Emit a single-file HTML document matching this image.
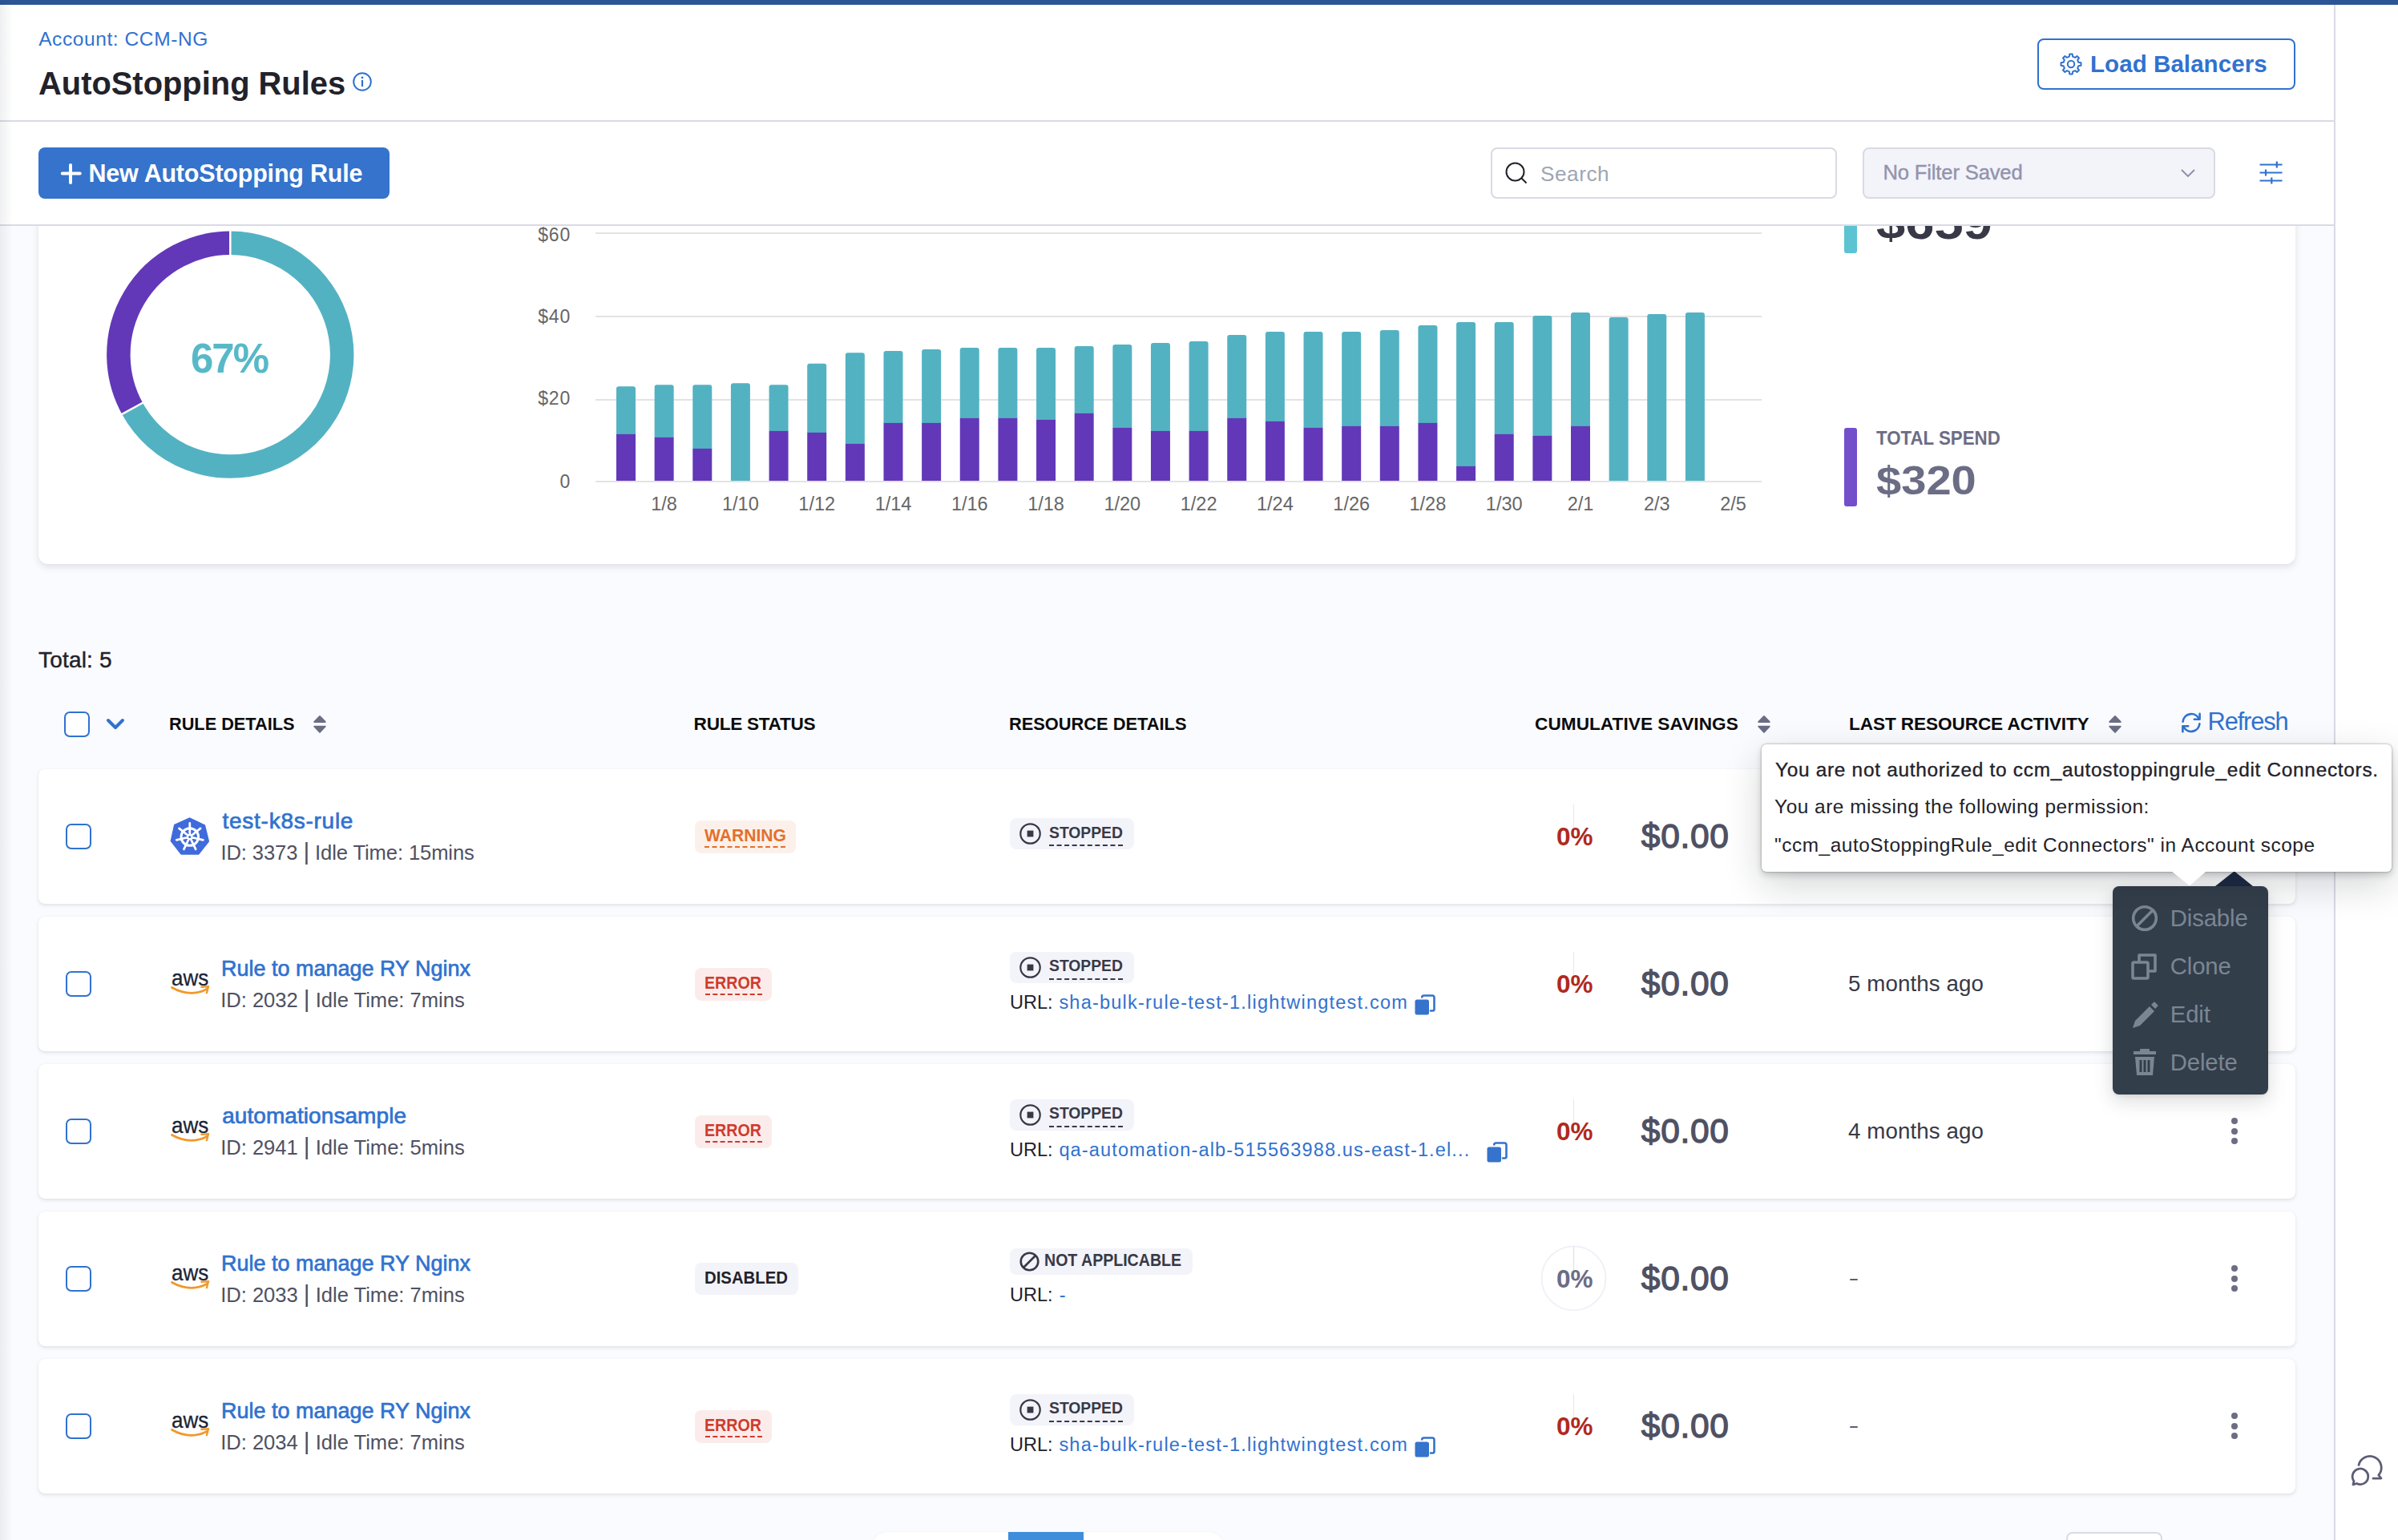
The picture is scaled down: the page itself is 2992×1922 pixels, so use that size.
<!DOCTYPE html><html><head><meta charset="utf-8"><style>
html,body{margin:0;padding:0;}
body{width:2992px;height:1922px;overflow:hidden;position:relative;background:#fafbfe;font-family:"Liberation Sans", sans-serif;}
.t{position:absolute;white-space:nowrap;}
.b{position:absolute;box-sizing:border-box;}
svg{position:absolute;overflow:visible;}
</style></head><body>
<div class="b" style="left:2912px;top:0px;width:80px;height:1922px;background:#ffffff;border-left:2px solid #d9dae5;"></div>
<div class="b" style="left:48px;top:180px;width:2816px;height:524px;background:#fff;border-radius:12px;box-shadow:0 0 2px rgba(40,41,61,0.04),0 4px 8px rgba(96,97,112,0.16);"></div>
<svg style="left:0;top:0" width="2992" height="1922" viewBox="0 0 2992 1922"><path d="M287.30,303.30 A139.4,139.4 0 1 1 165.14,509.86" fill="none" stroke="#53b2c2" stroke-width="29.5"/><path d="M165.14,509.86 A139.4,139.4 0 0 1 287.30,303.30" fill="none" stroke="#6238b9" stroke-width="29.5"/><line x1="287.3" y1="287.54999999999995" x2="287.3" y2="319.04999999999995" stroke="#fff" stroke-width="2.5"/><line x1="178.94" y1="502.27" x2="151.34" y2="517.44" stroke="#fff" stroke-width="2.5"/></svg>
<div class="t" id="pct67" style="left:-14.0px;width:600px;text-align:center;top:422.4px;font-size:51px;line-height:51px;color:#57b9c8;font-weight:700;letter-spacing:-2.1px;">67%</div>
<div class="b" style="left:743px;top:290px;width:1455px;height:2px;background:#e3e3e5;"></div>
<div class="b" style="left:743px;top:394px;width:1455px;height:2px;background:#e3e3e5;"></div>
<div class="b" style="left:743px;top:498px;width:1455px;height:2px;background:#e3e3e5;"></div>
<div class="b" style="left:743px;top:600px;width:1455px;height:2px;background:#e3e3e5;"></div>
<div class="t" id="yd60" style="right:2280.0px;top:281.9px;font-size:23px;line-height:23px;color:#666666;font-weight:400;letter-spacing:0.8px;">$60</div>
<div class="t" id="yd40" style="right:2280.0px;top:384.0px;font-size:23px;line-height:23px;color:#666666;font-weight:400;letter-spacing:0.8px;">$40</div>
<div class="t" id="yd20" style="right:2280.0px;top:485.9px;font-size:23px;line-height:23px;color:#666666;font-weight:400;letter-spacing:0.8px;">$20</div>
<div class="t" id="y0" style="right:2280.0px;top:590.1px;font-size:23px;line-height:23px;color:#666666;font-weight:400;letter-spacing:0.8px;">0</div>
<svg style="left:0;top:0" width="2992" height="1922" viewBox="0 0 2992 1922"><path d="M769.00,541.9 V485.2 Q769.00,482.2 772.00,482.2 H790.00 Q793.00,482.2 793.00,485.2 V541.9 Z" fill="#53b2c2"/><rect x="769.00" y="541.9" width="24" height="58.1" fill="#6238b9"/><path d="M816.64,545.9 V483.2 Q816.64,480.2 819.64,480.2 H837.64 Q840.64,480.2 840.64,483.2 V545.9 Z" fill="#53b2c2"/><rect x="816.64" y="545.9" width="24" height="54.1" fill="#6238b9"/><path d="M864.28,559.9 V483.2 Q864.28,480.2 867.28,480.2 H885.28 Q888.28,480.2 888.28,483.2 V559.9 Z" fill="#53b2c2"/><rect x="864.28" y="559.9" width="24" height="40.1" fill="#6238b9"/><path d="M911.92,600.0 V481.2 Q911.92,478.2 914.92,478.2 H932.92 Q935.92,478.2 935.92,481.2 V600.0 Z" fill="#53b2c2"/><path d="M959.56,537.9 V483.2 Q959.56,480.2 962.56,480.2 H980.56 Q983.56,480.2 983.56,483.2 V537.9 Z" fill="#53b2c2"/><rect x="959.56" y="537.9" width="24" height="62.1" fill="#6238b9"/><path d="M1007.20,539.9 V456.8 Q1007.20,453.8 1010.20,453.8 H1028.20 Q1031.20,453.8 1031.20,456.8 V539.9 Z" fill="#53b2c2"/><rect x="1007.20" y="539.9" width="24" height="60.1" fill="#6238b9"/><path d="M1054.84,553.9 V443.2 Q1054.84,440.2 1057.84,440.2 H1075.84 Q1078.84,440.2 1078.84,443.2 V553.9 Z" fill="#53b2c2"/><rect x="1054.84" y="553.9" width="24" height="46.1" fill="#6238b9"/><path d="M1102.48,527.9 V441.1 Q1102.48,438.1 1105.48,438.1 H1123.48 Q1126.48,438.1 1126.48,441.1 V527.9 Z" fill="#53b2c2"/><rect x="1102.48" y="527.9" width="24" height="72.1" fill="#6238b9"/><path d="M1150.12,527.9 V439.1 Q1150.12,436.1 1153.12,436.1 H1171.12 Q1174.12,436.1 1174.12,439.1 V527.9 Z" fill="#53b2c2"/><rect x="1150.12" y="527.9" width="24" height="72.1" fill="#6238b9"/><path d="M1197.76,521.9 V437.1 Q1197.76,434.1 1200.76,434.1 H1218.76 Q1221.76,434.1 1221.76,437.1 V521.9 Z" fill="#53b2c2"/><rect x="1197.76" y="521.9" width="24" height="78.1" fill="#6238b9"/><path d="M1245.40,521.9 V437.1 Q1245.40,434.1 1248.40,434.1 H1266.40 Q1269.40,434.1 1269.40,437.1 V521.9 Z" fill="#53b2c2"/><rect x="1245.40" y="521.9" width="24" height="78.1" fill="#6238b9"/><path d="M1293.04,523.9 V437.1 Q1293.04,434.1 1296.04,434.1 H1314.04 Q1317.04,434.1 1317.04,437.1 V523.9 Z" fill="#53b2c2"/><rect x="1293.04" y="523.9" width="24" height="76.1" fill="#6238b9"/><path d="M1340.68,515.9 V435.1 Q1340.68,432.1 1343.68,432.1 H1361.68 Q1364.68,432.1 1364.68,435.1 V515.9 Z" fill="#53b2c2"/><rect x="1340.68" y="515.9" width="24" height="84.1" fill="#6238b9"/><path d="M1388.32,533.9 V433.1 Q1388.32,430.1 1391.32,430.1 H1409.32 Q1412.32,430.1 1412.32,433.1 V533.9 Z" fill="#53b2c2"/><rect x="1388.32" y="533.9" width="24" height="66.1" fill="#6238b9"/><path d="M1435.96,537.9 V431.1 Q1435.96,428.1 1438.96,428.1 H1456.96 Q1459.96,428.1 1459.96,431.1 V537.9 Z" fill="#53b2c2"/><rect x="1435.96" y="537.9" width="24" height="62.1" fill="#6238b9"/><path d="M1483.60,537.9 V429.1 Q1483.60,426.1 1486.60,426.1 H1504.60 Q1507.60,426.1 1507.60,429.1 V537.9 Z" fill="#53b2c2"/><rect x="1483.60" y="537.9" width="24" height="62.1" fill="#6238b9"/><path d="M1531.24,521.9 V421.1 Q1531.24,418.1 1534.24,418.1 H1552.24 Q1555.24,418.1 1555.24,421.1 V521.9 Z" fill="#53b2c2"/><rect x="1531.24" y="521.9" width="24" height="78.1" fill="#6238b9"/><path d="M1578.88,525.9 V417.1 Q1578.88,414.1 1581.88,414.1 H1599.88 Q1602.88,414.1 1602.88,417.1 V525.9 Z" fill="#53b2c2"/><rect x="1578.88" y="525.9" width="24" height="74.1" fill="#6238b9"/><path d="M1626.52,533.9 V417.1 Q1626.52,414.1 1629.52,414.1 H1647.52 Q1650.52,414.1 1650.52,417.1 V533.9 Z" fill="#53b2c2"/><rect x="1626.52" y="533.9" width="24" height="66.1" fill="#6238b9"/><path d="M1674.16,531.9 V417.1 Q1674.16,414.1 1677.16,414.1 H1695.16 Q1698.16,414.1 1698.16,417.1 V531.9 Z" fill="#53b2c2"/><rect x="1674.16" y="531.9" width="24" height="68.1" fill="#6238b9"/><path d="M1721.80,531.9 V415.1 Q1721.80,412.1 1724.80,412.1 H1742.80 Q1745.80,412.1 1745.80,415.1 V531.9 Z" fill="#53b2c2"/><rect x="1721.80" y="531.9" width="24" height="68.1" fill="#6238b9"/><path d="M1769.44,527.9 V409.1 Q1769.44,406.1 1772.44,406.1 H1790.44 Q1793.44,406.1 1793.44,409.1 V527.9 Z" fill="#53b2c2"/><rect x="1769.44" y="527.9" width="24" height="72.1" fill="#6238b9"/><path d="M1817.08,581.9 V405.1 Q1817.08,402.1 1820.08,402.1 H1838.08 Q1841.08,402.1 1841.08,405.1 V581.9 Z" fill="#53b2c2"/><rect x="1817.08" y="581.9" width="24" height="18.1" fill="#6238b9"/><path d="M1864.72,541.9 V405.1 Q1864.72,402.1 1867.72,402.1 H1885.72 Q1888.72,402.1 1888.72,405.1 V541.9 Z" fill="#53b2c2"/><rect x="1864.72" y="541.9" width="24" height="58.1" fill="#6238b9"/><path d="M1912.36,543.9 V397.1 Q1912.36,394.1 1915.36,394.1 H1933.36 Q1936.36,394.1 1936.36,397.1 V543.9 Z" fill="#53b2c2"/><rect x="1912.36" y="543.9" width="24" height="56.1" fill="#6238b9"/><path d="M1960.00,531.9 V393.1 Q1960.00,390.1 1963.00,390.1 H1981.00 Q1984.00,390.1 1984.00,393.1 V531.9 Z" fill="#53b2c2"/><rect x="1960.00" y="531.9" width="24" height="68.1" fill="#6238b9"/><path d="M2007.64,600.0 V399.1 Q2007.64,396.1 2010.64,396.1 H2028.64 Q2031.64,396.1 2031.64,399.1 V600.0 Z" fill="#53b2c2"/><path d="M2055.28,600.0 V395.1 Q2055.28,392.1 2058.28,392.1 H2076.28 Q2079.28,392.1 2079.28,395.1 V600.0 Z" fill="#53b2c2"/><path d="M2102.92,600.0 V393.1 Q2102.92,390.1 2105.92,390.1 H2123.92 Q2126.92,390.1 2126.92,393.1 V600.0 Z" fill="#53b2c2"/></svg>
<div class="t" id="x1_8" style="left:528.6px;width:600px;text-align:center;top:618.1px;font-size:23.5px;line-height:23.5px;color:#666666;font-weight:400;">1/8</div>
<div class="t" id="x1_10" style="left:623.9px;width:600px;text-align:center;top:618.1px;font-size:23.5px;line-height:23.5px;color:#666666;font-weight:400;">1/10</div>
<div class="t" id="x1_12" style="left:719.2px;width:600px;text-align:center;top:618.1px;font-size:23.5px;line-height:23.5px;color:#666666;font-weight:400;">1/12</div>
<div class="t" id="x1_14" style="left:814.5px;width:600px;text-align:center;top:618.1px;font-size:23.5px;line-height:23.5px;color:#666666;font-weight:400;">1/14</div>
<div class="t" id="x1_16" style="left:909.8px;width:600px;text-align:center;top:618.1px;font-size:23.5px;line-height:23.5px;color:#666666;font-weight:400;">1/16</div>
<div class="t" id="x1_18" style="left:1005.0px;width:600px;text-align:center;top:618.1px;font-size:23.5px;line-height:23.5px;color:#666666;font-weight:400;">1/18</div>
<div class="t" id="x1_20" style="left:1100.3px;width:600px;text-align:center;top:618.1px;font-size:23.5px;line-height:23.5px;color:#666666;font-weight:400;">1/20</div>
<div class="t" id="x1_22" style="left:1195.6px;width:600px;text-align:center;top:618.1px;font-size:23.5px;line-height:23.5px;color:#666666;font-weight:400;">1/22</div>
<div class="t" id="x1_24" style="left:1290.9px;width:600px;text-align:center;top:618.1px;font-size:23.5px;line-height:23.5px;color:#666666;font-weight:400;">1/24</div>
<div class="t" id="x1_26" style="left:1386.2px;width:600px;text-align:center;top:618.1px;font-size:23.5px;line-height:23.5px;color:#666666;font-weight:400;">1/26</div>
<div class="t" id="x1_28" style="left:1481.4px;width:600px;text-align:center;top:618.1px;font-size:23.5px;line-height:23.5px;color:#666666;font-weight:400;">1/28</div>
<div class="t" id="x1_30" style="left:1576.7px;width:600px;text-align:center;top:618.1px;font-size:23.5px;line-height:23.5px;color:#666666;font-weight:400;">1/30</div>
<div class="t" id="x2_1" style="left:1672.0px;width:600px;text-align:center;top:618.1px;font-size:23.5px;line-height:23.5px;color:#666666;font-weight:400;">2/1</div>
<div class="t" id="x2_3" style="left:1767.3px;width:600px;text-align:center;top:618.1px;font-size:23.5px;line-height:23.5px;color:#666666;font-weight:400;">2/3</div>
<div class="t" id="x2_5" style="left:1862.6px;width:600px;text-align:center;top:618.1px;font-size:23.5px;line-height:23.5px;color:#666666;font-weight:400;">2/5</div>
<div class="b" style="left:2301px;top:218px;width:16px;height:98px;background:#5bc3d1;border-radius:3px;"></div>
<div class="t" id="leg1" style="left:2341.0px;top:249.2px;font-size:58px;line-height:58px;color:#383946;font-weight:700;transform:scaleX(1.123);transform-origin:0 0;">$659</div>
<div class="b" style="left:2301px;top:534px;width:16px;height:98px;background:#734fcb;border-radius:3px;"></div>
<div class="t" id="leg2l" style="left:2341.0px;top:535.9px;font-size:23px;line-height:23px;color:#6b6d85;font-weight:700;transform:scaleX(0.9686);transform-origin:0 0;">TOTAL SPEND</div>
<div class="t" id="leg2" style="left:2341.0px;top:575.3px;font-size:49.5px;line-height:49.5px;color:#6b6d85;font-weight:700;transform:scaleX(1.133);transform-origin:0 0;">$320</div>
<div class="b" style="left:0px;top:0px;width:2912px;height:152px;background:#fff;border-bottom:2px solid #d9dae5;"></div>
<div class="b" style="left:0px;top:152px;width:2912px;height:130px;background:#fff;border-bottom:2px solid #d9dae5;"></div>
<div class="b" style="left:0px;top:0px;width:2992px;height:6px;background:#2c5596;"></div>
<div class="t" id="acct" style="left:48.2px;top:37.1px;font-size:24.5px;line-height:24.5px;color:#3072cf;font-weight:400;letter-spacing:0.585px;">Account: CCM-NG</div>
<div class="t" id="title" style="left:48.2px;top:83.3px;font-size:41.5px;line-height:41.5px;color:#22222a;font-weight:700;transform:scaleX(0.9607);transform-origin:0 0;">AutoStopping Rules</div>
<svg style="left:440px;top:90px" width="24" height="24" viewBox="0 0 24 24"><circle cx="12" cy="12" r="10.8" fill="none" stroke="#3072cf" stroke-width="2"/><rect x="10.9" y="10" width="2.2" height="8" fill="#3072cf"/><circle cx="12" cy="6.8" r="1.4" fill="#3072cf"/></svg>
<div class="b" style="left:2542px;top:48px;width:322px;height:64px;border:2px solid #3072cf;border-radius:8px;background:#fff;"></div>
<svg style="left:2570px;top:66px" width="28" height="28" viewBox="0 0 28 28"><path fill="none" stroke="#3072cf" stroke-width="2" stroke-linejoin="round" d="M11.84,4.65 L12.25,1.52 L15.75,1.52 L16.16,4.65 L19.09,5.86 L21.58,3.94 L24.06,6.42 L22.14,8.91 L23.35,11.84 L26.48,12.25 L26.48,15.75 L23.35,16.16 L22.14,19.09 L24.06,21.58 L21.58,24.06 L19.09,22.14 L16.16,23.35 L15.75,26.48 L12.25,26.48 L11.84,23.35 L8.91,22.14 L6.42,24.06 L3.94,21.58 L5.86,19.09 L4.65,16.16 L1.52,15.75 L1.52,12.25 L4.65,11.84 L5.86,8.91 L3.94,6.42 L6.42,3.94 L8.91,5.86 Z"/><circle cx="14" cy="14" r="4.2" fill="none" stroke="#3072cf" stroke-width="2"/></svg>
<div class="t" id="lb" style="left:2608.0px;top:65.2px;font-size:29.5px;line-height:29.5px;color:#3072cf;font-weight:700;letter-spacing:0.07px;">Load Balancers</div>
<div class="b" style="left:48px;top:184px;width:438px;height:64px;background:#3573cc;border-radius:8px;"></div>
<svg style="left:74px;top:202px" width="28" height="28" viewBox="0 0 28 28"><path d="M14 4v22M3.8 14.5h22" stroke="#fff" stroke-width="4" stroke-linecap="round"/></svg>
<div class="t" id="newrule" style="left:110.4px;top:200.6px;font-size:30.5px;line-height:30.5px;color:#ffffff;font-weight:700;letter-spacing:-0.205px;">New AutoStopping Rule</div>
<div class="b" style="left:1860px;top:184px;width:432px;height:64px;border:2px solid #d9dae5;border-radius:8px;background:#fff;"></div>
<svg style="left:1877px;top:201px" width="30" height="30" viewBox="0 0 30 30"><circle cx="13.5" cy="13.5" r="11" fill="none" stroke="#22222a" stroke-width="2"/><path d="M21.5 21.5l6 6" stroke="#22222a" stroke-width="2"/></svg>
<div class="t" id="search" style="left:1922.0px;top:203.9px;font-size:26.2px;line-height:26.2px;color:#9ea6b4;font-weight:400;letter-spacing:0.52px;">Search</div>
<div class="b" style="left:2324px;top:184px;width:440px;height:64px;border:2px solid #d9dae5;border-radius:8px;background:#f3f3fa;"></div>
<div class="t" id="nofilter" style="left:2349.4px;top:202.6px;font-size:25.6px;line-height:25.6px;color:#9293ab;font-weight:400;letter-spacing:-0.149px;-webkit-text-stroke:0.4px #9293ab;">No Filter Saved</div>
<svg style="left:2720px;top:209px" width="20" height="14" viewBox="0 0 20 14"><path d="M2 3l8 8 8-8" fill="none" stroke="#8b8da4" stroke-width="1.8"/></svg>
<svg style="left:2818px;top:200px" width="32" height="32" viewBox="0 0 32 32"><g stroke="#3072cf" stroke-width="2.2"><path d="M1.5 5.5h28M1.5 15.5h28M1.5 25.5h28"/><path d="M22.8 1.5v8M9 11.5v8M16.3 21.5v8"/></g></svg>
<div class="t" id="total" style="left:48.0px;top:809.7px;font-size:28px;line-height:28px;color:#22222a;font-weight:400;letter-spacing:0.188px;-webkit-text-stroke:0.45px #22222a;">Total: 5</div>
<div class="b" style="left:80px;top:888px;width:32px;height:32px;border:2px solid #3072cf;border-radius:7px;background:#fff;"></div>
<svg style="left:132px;top:896px" width="24" height="16" viewBox="0 0 24 16"><path d="M3 3l9 9 9-9" fill="none" stroke="#3072cf" stroke-width="4" stroke-linecap="round" stroke-linejoin="round"/></svg>
<div class="t" id="h1" style="left:210.8px;top:892.9px;font-size:22.6px;line-height:22.6px;color:#0b0b0d;font-weight:700;transform:scaleX(0.9614);transform-origin:0 0;">RULE DETAILS</div>
<svg style="left:391px;top:892px" width="17" height="24" viewBox="0 0 17 24"><path d="M8 2 L14.8 9 H1.2Z M1.2 14.6 H14.8 L8 21.8Z" fill="#6b6d85" stroke="#6b6d85" stroke-width="1.8" stroke-linejoin="round"/></svg>
<div class="t" id="h2" style="left:865.6px;top:892.9px;font-size:22.6px;line-height:22.6px;color:#0b0b0d;font-weight:700;letter-spacing:-0.28px;">RULE STATUS</div>
<div class="t" id="h3" style="left:1259.0px;top:892.9px;font-size:22.6px;line-height:22.6px;color:#0b0b0d;font-weight:700;transform:scaleX(0.9657);transform-origin:0 0;">RESOURCE DETAILS</div>
<div class="t" id="h4" style="left:1915.0px;top:892.9px;font-size:22.6px;line-height:22.6px;color:#0b0b0d;font-weight:700;letter-spacing:0.059px;">CUMULATIVE SAVINGS</div>
<svg style="left:2193px;top:892px" width="17" height="24" viewBox="0 0 17 24"><path d="M8 2 L14.8 9 H1.2Z M1.2 14.6 H14.8 L8 21.8Z" fill="#6b6d85" stroke="#6b6d85" stroke-width="1.8" stroke-linejoin="round"/></svg>
<div class="t" id="h5" style="left:2307.0px;top:892.9px;font-size:22.6px;line-height:22.6px;color:#0b0b0d;font-weight:700;letter-spacing:-0.095px;">LAST RESOURCE ACTIVITY</div>
<svg style="left:2631px;top:892px" width="17" height="24" viewBox="0 0 17 24"><path d="M8 2 L14.8 9 H1.2Z M1.2 14.6 H14.8 L8 21.8Z" fill="#6b6d85" stroke="#6b6d85" stroke-width="1.8" stroke-linejoin="round"/></svg>
<svg style="left:2721px;top:889px" width="26" height="26" viewBox="0 0 26 26"><g fill="none" stroke="#3072cf" stroke-width="2.6" stroke-linecap="round" stroke-linejoin="round"><path d="M2.6,11.6 A10.6,10.6 0 0 1 22.2,7.2"/><path d="M23.6,1.8 V8.8 H16.8"/><path d="M23.4,14.4 A10.6,10.6 0 0 1 3.8,18.8"/><path d="M2.4,24.2 V17.2 H9.2"/></g></svg>
<div class="t" id="refresh" style="left:2754.6px;top:886.2px;font-size:30.8px;line-height:30.8px;color:#3072cf;font-weight:400;letter-spacing:-1.15px;">Refresh</div>
<div class="b" style="left:48px;top:960px;width:2816px;height:168px;background:#fff;border-radius:8px;box-shadow:0 0 1px rgba(40,41,61,0.08),0 2px 4px rgba(96,97,112,0.16);"></div>
<div class="b" style="left:82px;top:1028px;width:32px;height:32px;border:2px solid #3072cf;border-radius:7px;background:#fff;"></div>
<svg style="left:212px;top:1020px" width="50" height="48" viewBox="0 0 50 48"><path d="M24.6,1.6 L43,10.5 L47.8,30 L35.5,45.5 L14.4,45.5 L1.9,29.5 L6.2,10 Z" fill="#3f6bdc" stroke="#3f6bdc" stroke-width="2.5" stroke-linejoin="round"/><circle cx="24.8" cy="24.5" r="10.8" fill="none" stroke="#fff" stroke-width="3"/><path d="M24.80,24.50 L24.80,7.50 M24.80,24.50 L38.09,13.90 M24.80,24.50 L41.37,28.28 M24.80,24.50 L32.18,39.82 M24.80,24.50 L17.42,39.82 M24.80,24.50 L8.23,28.28 M24.80,24.50 L11.51,13.90 " stroke="#fff" stroke-width="2.8" stroke-linecap="round"/><circle cx="24.8" cy="24.5" r="3.2" fill="#fff"/><circle cx="24.8" cy="24.5" r="1.6" fill="#3f6bdc"/></svg>
<div class="t" id="r0t" style="left:277.5px;top:1011.2px;font-size:28px;line-height:28px;color:#3072cf;font-weight:400;letter-spacing:0.741px;-webkit-text-stroke:0.7px #3072cf;">test-k8s-rule</div>
<div class="t" id="r0id" style="left:275.5px;top:1049.9px;font-size:25.6px;line-height:25.6px;color:#4f5162;font-weight:400;letter-spacing:-0.111px;">ID: 3373 <span style="font-size:30px">|</span> Idle Time: 15mins</div>
<div class="b" style="left:867px;top:1024px;width:126px;height:41px;background:#fcf1ea;border-radius:8px;"></div>
<div class="t" id="r0s" style="left:879.0px;top:1033.3px;font-size:21.5px;line-height:21.5px;color:#e36f2c;font-weight:700;transform:scaleX(0.9806);transform-origin:0 0;">WARNING</div>
<div class="b" style="left:879px;top:1056px;width:101px;height:0px;border-top:2px dashed #e36f2c;"></div>
<div class="b" style="left:1260px;top:1021px;width:155px;height:39px;background:#f3f3fa;border-radius:8px;"></div>
<svg style="left:1272px;top:1027px" width="27" height="27" viewBox="0 0 27 27"><circle cx="13.5" cy="13.5" r="12.2" fill="none" stroke="#383946" stroke-width="2.2"/><rect x="9.6" y="9.6" width="7.8" height="7.8" fill="#383946"/></svg>
<div class="t" id="r0r" style="left:1308.6px;top:1028.7px;font-size:20.7px;line-height:20.7px;color:#383946;font-weight:700;transform:scaleX(0.9334);transform-origin:0 0;">STOPPED</div>
<div class="b" style="left:1308.7px;top:1054px;width:92px;height:0px;border-top:2px dashed #383946;"></div>
<div class="b" style="left:1963px;top:1004px;width:1.2px;height:40px;background:#f6e1e0;"></div>
<div class="t" id="r0p" style="left:1942.0px;top:1028.5px;font-size:31.5px;line-height:31.5px;color:#b0291e;font-weight:700;">0%</div>
<div class="t" id="r0d" style="left:2047.8px;top:1022.5px;font-size:42.5px;line-height:42.5px;color:#4f5162;font-weight:400;letter-spacing:0.7px;-webkit-text-stroke:1.3px #4f5162;">$0.00</div>
<svg style="left:2780px;top:1023px" width="16" height="42" viewBox="0 0 16 42"><circle cx="8" cy="8" r="4" fill="#6b6d85"/><circle cx="8" cy="21" r="4" fill="#6b6d85"/><circle cx="8" cy="33" r="4" fill="#6b6d85"/></svg>
<div class="b" style="left:48px;top:1144px;width:2816px;height:168px;background:#fff;border-radius:8px;box-shadow:0 0 1px rgba(40,41,61,0.08),0 2px 4px rgba(96,97,112,0.16);"></div>
<div class="b" style="left:82px;top:1212px;width:32px;height:32px;border:2px solid #3072cf;border-radius:7px;background:#fff;"></div>
<div class="t" style="left:214px;top:1206.6px;font-size:28px;line-height:28px;color:#1b2436;font-weight:400;transform:scaleX(0.93);transform-origin:0 0;-webkit-text-stroke:0.3px #1b2436">aws</div>
<svg style="left:213px;top:1230px" width="50" height="14" viewBox="0 0 50 14"><path d="M1.5 2.5 Q24 15 45 4.5" fill="none" stroke="#f0992b" stroke-width="2.8" stroke-linecap="round"/><path d="M38.5 1.8 L47 1.2 L45 9" fill="none" stroke="#f0992b" stroke-width="2.4" stroke-linecap="round" stroke-linejoin="round"/></svg>
<div class="t" id="r1t" style="left:276.2px;top:1195.2px;font-size:28px;line-height:28px;color:#3072cf;font-weight:400;-webkit-text-stroke:0.7px #3072cf;transform:scaleX(0.9639);transform-origin:0 0;">Rule to manage RY Nginx</div>
<div class="t" id="r1id" style="left:275.2px;top:1233.9px;font-size:25.6px;line-height:25.6px;color:#4f5162;font-weight:400;letter-spacing:-0.023px;">ID: 2032 <span style="font-size:30px">|</span> Idle Time: 7mins</div>
<div class="b" style="left:867px;top:1208px;width:96px;height:41px;background:#fbeceb;border-radius:8px;"></div>
<div class="t" id="r1s" style="left:879.0px;top:1217.3px;font-size:21.5px;line-height:21.5px;color:#cf3b2c;font-weight:700;transform:scaleX(0.915);transform-origin:0 0;">ERROR</div>
<div class="b" style="left:879.5px;top:1240px;width:71px;height:0px;border-top:2px dashed #cf3b2c;"></div>
<div class="b" style="left:1260px;top:1187.5px;width:155px;height:39px;background:#f3f3fa;border-radius:8px;"></div>
<svg style="left:1272px;top:1193.5px" width="27" height="27" viewBox="0 0 27 27"><circle cx="13.5" cy="13.5" r="12.2" fill="none" stroke="#383946" stroke-width="2.2"/><rect x="9.6" y="9.6" width="7.8" height="7.8" fill="#383946"/></svg>
<div class="t" id="r1r" style="left:1308.6px;top:1195.2px;font-size:20.7px;line-height:20.7px;color:#383946;font-weight:700;transform:scaleX(0.9334);transform-origin:0 0;">STOPPED</div>
<div class="b" style="left:1308.7px;top:1220.5px;width:92px;height:0px;border-top:2px dashed #383946;"></div>
<div class="t" id="r1u" style="left:1260.0px;top:1239.9px;font-size:23.5px;line-height:23.5px;color:#22222a;font-weight:400;letter-spacing:0.034px;">URL:</div>
<div class="t" id="r1ul" style="left:1321.4px;top:1239.9px;font-size:23.5px;line-height:23.5px;color:#3072cf;font-weight:400;letter-spacing:1.225px;">sha-bulk-rule-test-1.lightwingtest.com</div>
<svg style="left:1764.5px;top:1240.5px" width="26" height="26" viewBox="0 0 26 26"><rect x="0.5" y="6.5" width="17.5" height="19" rx="2.5" fill="#3573cc"/><path d="M9.2 3.5 Q9.5 1.5 11.5 1.5 H22 Q24.5 1.5 24.5 4 V18.5 Q24.5 20.5 22.5 20.5 H20" fill="none" stroke="#3573cc" stroke-width="2.6" stroke-linecap="round"/></svg>
<div class="b" style="left:1963px;top:1188px;width:1.2px;height:40px;background:#f6e1e0;"></div>
<div class="t" id="r1p" style="left:1942.0px;top:1212.5px;font-size:31.5px;line-height:31.5px;color:#b0291e;font-weight:700;">0%</div>
<div class="t" id="r1d" style="left:2047.8px;top:1206.5px;font-size:42.5px;line-height:42.5px;color:#4f5162;font-weight:400;letter-spacing:0.7px;-webkit-text-stroke:1.3px #4f5162;">$0.00</div>
<div class="t" id="r1a" style="left:2306.0px;top:1214.2px;font-size:27.7px;line-height:27.7px;color:#383946;font-weight:400;letter-spacing:0.091px;">5 months ago</div>
<svg style="left:2780px;top:1207px" width="16" height="42" viewBox="0 0 16 42"><circle cx="8" cy="8" r="4" fill="#6b6d85"/><circle cx="8" cy="21" r="4" fill="#6b6d85"/><circle cx="8" cy="33" r="4" fill="#6b6d85"/></svg>
<div class="b" style="left:48px;top:1328px;width:2816px;height:168px;background:#fff;border-radius:8px;box-shadow:0 0 1px rgba(40,41,61,0.08),0 2px 4px rgba(96,97,112,0.16);"></div>
<div class="b" style="left:82px;top:1396px;width:32px;height:32px;border:2px solid #3072cf;border-radius:7px;background:#fff;"></div>
<div class="t" style="left:214px;top:1390.6px;font-size:28px;line-height:28px;color:#1b2436;font-weight:400;transform:scaleX(0.93);transform-origin:0 0;-webkit-text-stroke:0.3px #1b2436">aws</div>
<svg style="left:213px;top:1414px" width="50" height="14" viewBox="0 0 50 14"><path d="M1.5 2.5 Q24 15 45 4.5" fill="none" stroke="#f0992b" stroke-width="2.8" stroke-linecap="round"/><path d="M38.5 1.8 L47 1.2 L45 9" fill="none" stroke="#f0992b" stroke-width="2.4" stroke-linecap="round" stroke-linejoin="round"/></svg>
<div class="t" id="r2t" style="left:277.2px;top:1379.2px;font-size:28px;line-height:28px;color:#3072cf;font-weight:400;letter-spacing:0.067px;-webkit-text-stroke:0.7px #3072cf;">automationsample</div>
<div class="t" id="r2id" style="left:275.2px;top:1417.9px;font-size:25.6px;line-height:25.6px;color:#4f5162;font-weight:400;letter-spacing:-0.023px;">ID: 2941 <span style="font-size:30px">|</span> Idle Time: 5mins</div>
<div class="b" style="left:867px;top:1392px;width:96px;height:41px;background:#fbeceb;border-radius:8px;"></div>
<div class="t" id="r2s" style="left:879.0px;top:1401.3px;font-size:21.5px;line-height:21.5px;color:#cf3b2c;font-weight:700;transform:scaleX(0.915);transform-origin:0 0;">ERROR</div>
<div class="b" style="left:879.5px;top:1424px;width:71px;height:0px;border-top:2px dashed #cf3b2c;"></div>
<div class="b" style="left:1260px;top:1371.5px;width:155px;height:39px;background:#f3f3fa;border-radius:8px;"></div>
<svg style="left:1272px;top:1377.5px" width="27" height="27" viewBox="0 0 27 27"><circle cx="13.5" cy="13.5" r="12.2" fill="none" stroke="#383946" stroke-width="2.2"/><rect x="9.6" y="9.6" width="7.8" height="7.8" fill="#383946"/></svg>
<div class="t" id="r2r" style="left:1308.6px;top:1379.2px;font-size:20.7px;line-height:20.7px;color:#383946;font-weight:700;transform:scaleX(0.9334);transform-origin:0 0;">STOPPED</div>
<div class="b" style="left:1308.7px;top:1404.5px;width:92px;height:0px;border-top:2px dashed #383946;"></div>
<div class="t" id="r2u" style="left:1260.0px;top:1423.9px;font-size:23.5px;line-height:23.5px;color:#22222a;font-weight:400;letter-spacing:0.034px;">URL:</div>
<div class="t" id="r2ul" style="left:1321.4px;top:1423.9px;font-size:23.5px;line-height:23.5px;color:#3072cf;font-weight:400;letter-spacing:1.145px;">qa-automation-alb-515563988.us-east-1.el...</div>
<svg style="left:1854.8px;top:1424.5px" width="26" height="26" viewBox="0 0 26 26"><rect x="0.5" y="6.5" width="17.5" height="19" rx="2.5" fill="#3573cc"/><path d="M9.2 3.5 Q9.5 1.5 11.5 1.5 H22 Q24.5 1.5 24.5 4 V18.5 Q24.5 20.5 22.5 20.5 H20" fill="none" stroke="#3573cc" stroke-width="2.6" stroke-linecap="round"/></svg>
<div class="b" style="left:1963px;top:1372px;width:1.2px;height:40px;background:#f6e1e0;"></div>
<div class="t" id="r2p" style="left:1942.0px;top:1396.5px;font-size:31.5px;line-height:31.5px;color:#b0291e;font-weight:700;">0%</div>
<div class="t" id="r2d" style="left:2047.8px;top:1390.5px;font-size:42.5px;line-height:42.5px;color:#4f5162;font-weight:400;letter-spacing:0.7px;-webkit-text-stroke:1.3px #4f5162;">$0.00</div>
<div class="t" id="r2a" style="left:2306.0px;top:1398.2px;font-size:27.7px;line-height:27.7px;color:#383946;font-weight:400;letter-spacing:0.091px;">4 months ago</div>
<svg style="left:2780px;top:1391px" width="16" height="42" viewBox="0 0 16 42"><circle cx="8" cy="8" r="4" fill="#6b6d85"/><circle cx="8" cy="21" r="4" fill="#6b6d85"/><circle cx="8" cy="33" r="4" fill="#6b6d85"/></svg>
<div class="b" style="left:48px;top:1512px;width:2816px;height:168px;background:#fff;border-radius:8px;box-shadow:0 0 1px rgba(40,41,61,0.08),0 2px 4px rgba(96,97,112,0.16);"></div>
<div class="b" style="left:82px;top:1580px;width:32px;height:32px;border:2px solid #3072cf;border-radius:7px;background:#fff;"></div>
<div class="t" style="left:214px;top:1574.6px;font-size:28px;line-height:28px;color:#1b2436;font-weight:400;transform:scaleX(0.93);transform-origin:0 0;-webkit-text-stroke:0.3px #1b2436">aws</div>
<svg style="left:213px;top:1598px" width="50" height="14" viewBox="0 0 50 14"><path d="M1.5 2.5 Q24 15 45 4.5" fill="none" stroke="#f0992b" stroke-width="2.8" stroke-linecap="round"/><path d="M38.5 1.8 L47 1.2 L45 9" fill="none" stroke="#f0992b" stroke-width="2.4" stroke-linecap="round" stroke-linejoin="round"/></svg>
<div class="t" id="r3t" style="left:276.2px;top:1563.2px;font-size:28px;line-height:28px;color:#3072cf;font-weight:400;-webkit-text-stroke:0.7px #3072cf;transform:scaleX(0.9639);transform-origin:0 0;">Rule to manage RY Nginx</div>
<div class="t" id="r3id" style="left:275.2px;top:1601.9px;font-size:25.6px;line-height:25.6px;color:#4f5162;font-weight:400;letter-spacing:-0.023px;">ID: 2033 <span style="font-size:30px">|</span> Idle Time: 7mins</div>
<div class="b" style="left:867px;top:1576px;width:129px;height:40px;background:#f3f3fa;border-radius:8px;"></div>
<div class="t" id="r3s" style="left:879.0px;top:1585.1px;font-size:21.5px;line-height:21.5px;color:#22222a;font-weight:700;transform:scaleX(0.9459);transform-origin:0 0;">DISABLED</div>
<div class="b" style="left:1260px;top:1558px;width:228px;height:33px;background:#f3f3fa;border-radius:8px;"></div>
<svg style="left:1272px;top:1562px" width="25" height="25" viewBox="0 0 25 25"><circle cx="12.5" cy="12.5" r="10.8" fill="none" stroke="#383946" stroke-width="2.6"/><path d="M5 20L20 5" stroke="#383946" stroke-width="2.6"/></svg>
<div class="t" id="r3r" style="left:1303.0px;top:1563.4px;font-size:21.5px;line-height:21.5px;color:#383946;font-weight:700;transform:scaleX(0.91);transform-origin:0 0;">NOT APPLICABLE</div>
<div class="t" id="r3u" style="left:1260.0px;top:1604.6px;font-size:23.5px;line-height:23.5px;color:#22222a;font-weight:400;letter-spacing:0.034px;">URL:</div>
<div class="t" id="r3ul" style="left:1321.8px;top:1604.6px;font-size:23.5px;line-height:23.5px;color:#3072cf;font-weight:400;">-</div>
<svg style="left:1920px;top:1552px" width="88" height="88" viewBox="0 0 88 88"><circle cx="43.5" cy="43.4" r="40" fill="none" stroke="#efeff6" stroke-width="1.8"/><path d="M43.5 3.4v40" stroke="#e4e4ec" stroke-width="1.5"/></svg>
<div class="t" id="r3p" style="left:1942.0px;top:1580.5px;font-size:31.5px;line-height:31.5px;color:#6b6d85;font-weight:700;">0%</div>
<div class="t" id="r3d" style="left:2047.8px;top:1574.5px;font-size:42.5px;line-height:42.5px;color:#4f5162;font-weight:400;letter-spacing:0.7px;-webkit-text-stroke:1.3px #4f5162;">$0.00</div>
<div class="b" style="left:2308px;top:1596px;width:9.5px;height:2.2px;background:#5d5f77;border-radius:1px;"></div>
<svg style="left:2780px;top:1575px" width="16" height="42" viewBox="0 0 16 42"><circle cx="8" cy="8" r="4" fill="#6b6d85"/><circle cx="8" cy="21" r="4" fill="#6b6d85"/><circle cx="8" cy="33" r="4" fill="#6b6d85"/></svg>
<div class="b" style="left:48px;top:1696px;width:2816px;height:168px;background:#fff;border-radius:8px;box-shadow:0 0 1px rgba(40,41,61,0.08),0 2px 4px rgba(96,97,112,0.16);"></div>
<div class="b" style="left:82px;top:1764px;width:32px;height:32px;border:2px solid #3072cf;border-radius:7px;background:#fff;"></div>
<div class="t" style="left:214px;top:1758.6px;font-size:28px;line-height:28px;color:#1b2436;font-weight:400;transform:scaleX(0.93);transform-origin:0 0;-webkit-text-stroke:0.3px #1b2436">aws</div>
<svg style="left:213px;top:1782px" width="50" height="14" viewBox="0 0 50 14"><path d="M1.5 2.5 Q24 15 45 4.5" fill="none" stroke="#f0992b" stroke-width="2.8" stroke-linecap="round"/><path d="M38.5 1.8 L47 1.2 L45 9" fill="none" stroke="#f0992b" stroke-width="2.4" stroke-linecap="round" stroke-linejoin="round"/></svg>
<div class="t" id="r4t" style="left:276.2px;top:1747.2px;font-size:28px;line-height:28px;color:#3072cf;font-weight:400;-webkit-text-stroke:0.7px #3072cf;transform:scaleX(0.9639);transform-origin:0 0;">Rule to manage RY Nginx</div>
<div class="t" id="r4id" style="left:275.2px;top:1785.9px;font-size:25.6px;line-height:25.6px;color:#4f5162;font-weight:400;letter-spacing:-0.023px;">ID: 2034 <span style="font-size:30px">|</span> Idle Time: 7mins</div>
<div class="b" style="left:867px;top:1760px;width:96px;height:41px;background:#fbeceb;border-radius:8px;"></div>
<div class="t" id="r4s" style="left:879.0px;top:1769.3px;font-size:21.5px;line-height:21.5px;color:#cf3b2c;font-weight:700;transform:scaleX(0.915);transform-origin:0 0;">ERROR</div>
<div class="b" style="left:879.5px;top:1792px;width:71px;height:0px;border-top:2px dashed #cf3b2c;"></div>
<div class="b" style="left:1260px;top:1739.5px;width:155px;height:39px;background:#f3f3fa;border-radius:8px;"></div>
<svg style="left:1272px;top:1745.5px" width="27" height="27" viewBox="0 0 27 27"><circle cx="13.5" cy="13.5" r="12.2" fill="none" stroke="#383946" stroke-width="2.2"/><rect x="9.6" y="9.6" width="7.8" height="7.8" fill="#383946"/></svg>
<div class="t" id="r4r" style="left:1308.6px;top:1747.2px;font-size:20.7px;line-height:20.7px;color:#383946;font-weight:700;transform:scaleX(0.9334);transform-origin:0 0;">STOPPED</div>
<div class="b" style="left:1308.7px;top:1772.5px;width:92px;height:0px;border-top:2px dashed #383946;"></div>
<div class="t" id="r4u" style="left:1260.0px;top:1791.9px;font-size:23.5px;line-height:23.5px;color:#22222a;font-weight:400;letter-spacing:0.034px;">URL:</div>
<div class="t" id="r4ul" style="left:1321.4px;top:1791.9px;font-size:23.5px;line-height:23.5px;color:#3072cf;font-weight:400;letter-spacing:1.225px;">sha-bulk-rule-test-1.lightwingtest.com</div>
<svg style="left:1764.5px;top:1792.5px" width="26" height="26" viewBox="0 0 26 26"><rect x="0.5" y="6.5" width="17.5" height="19" rx="2.5" fill="#3573cc"/><path d="M9.2 3.5 Q9.5 1.5 11.5 1.5 H22 Q24.5 1.5 24.5 4 V18.5 Q24.5 20.5 22.5 20.5 H20" fill="none" stroke="#3573cc" stroke-width="2.6" stroke-linecap="round"/></svg>
<div class="b" style="left:1963px;top:1740px;width:1.2px;height:40px;background:#f6e1e0;"></div>
<div class="t" id="r4p" style="left:1942.0px;top:1764.5px;font-size:31.5px;line-height:31.5px;color:#b0291e;font-weight:700;">0%</div>
<div class="t" id="r4d" style="left:2047.8px;top:1758.5px;font-size:42.5px;line-height:42.5px;color:#4f5162;font-weight:400;letter-spacing:0.7px;-webkit-text-stroke:1.3px #4f5162;">$0.00</div>
<div class="b" style="left:2308px;top:1780px;width:9.5px;height:2.2px;background:#5d5f77;border-radius:1px;"></div>
<svg style="left:2780px;top:1759px" width="16" height="42" viewBox="0 0 16 42"><circle cx="8" cy="8" r="4" fill="#6b6d85"/><circle cx="8" cy="21" r="4" fill="#6b6d85"/><circle cx="8" cy="33" r="4" fill="#6b6d85"/></svg>
<div class="b" style="left:1087px;top:1912px;width:441px;height:40px;background:#fff;border-radius:20px;box-shadow:0 0 2px rgba(40,41,61,0.08);"></div>
<div class="b" style="left:1258px;top:1912px;width:94px;height:20px;background:#3f8edb;"></div>
<div class="b" style="left:2578px;top:1912px;width:120px;height:30px;border:2px solid #d9dae5;border-radius:8px;background:#fff;"></div>
<svg style="left:2931px;top:1810.5px" width="48" height="48" viewBox="0 0 48 48"><g fill="none" stroke="#5c5e75" stroke-width="2.8" stroke-linecap="round" stroke-linejoin="round"><path d="M12,17.5 A14.3,14.3 0 1 1 36.8,30 L40,34 L30,34.2"/><path d="M6,37.5 A9.8,9.8 0 1 1 9.5,40.5 L5,41.8 Z"/></g></svg>
<svg style="left:2760px;top:1084px" width="56" height="26" viewBox="0 0 56 26"><path d="M4 22 L27.7 3.3 L51 22 Z" fill="#1e2a45"/></svg>
<div class="b" style="left:2636px;top:1106px;width:194px;height:260px;background:#333e4b;border-radius:8px;box-shadow:0 2px 4px rgba(16,22,26,0.08),0 8px 24px rgba(16,22,26,0.15);"></div>
<svg style="left:2658px;top:1128px" width="36" height="36" viewBox="0 0 36 36"><circle cx="18" cy="18" r="14.3" fill="none" stroke="#7b8693" stroke-width="3.6"/><path d="M8 28L28 8" stroke="#7b8693" stroke-width="3.6"/></svg>
<div class="t" id="m1" style="left:2707.8px;top:1131.3px;font-size:29.3px;line-height:29.3px;color:#7b8693;font-weight:400;letter-spacing:-0.133px;">Disable</div>
<svg style="left:2658px;top:1188px" width="36" height="36" viewBox="0 0 36 36"><g fill="none" stroke="#7b8693" stroke-width="3.6" stroke-linejoin="round"><rect x="3" y="13" width="19" height="20" rx="1.5"/><path d="M11 13V4h20v20h-9"/></g></svg>
<div class="t" id="m2" style="left:2707.8px;top:1191.3px;font-size:29.3px;line-height:29.3px;color:#7b8693;font-weight:400;letter-spacing:-0.133px;">Clone</div>
<svg style="left:2658px;top:1248px" width="36" height="36" viewBox="0 0 36 36"><path d="M3 35 L6 26 L24 8 L30 14 L12 32 Z M26 6 L29 3 Q30 2 31 3 L34 6 Q35 7 34 8 L31 11 Z" fill="#7b8693"/></svg>
<div class="t" id="m3" style="left:2707.8px;top:1251.4px;font-size:29.3px;line-height:29.3px;color:#7b8693;font-weight:400;letter-spacing:-0.133px;">Edit</div>
<svg style="left:2658px;top:1308px" width="36" height="36" viewBox="0 0 36 36"><g fill="#7b8693"><rect x="4" y="4" width="28" height="4"/><rect x="12" y="1" width="12" height="4" rx="1"/><path d="M6 11h24l-2 23H8z"/></g><g fill="#333e4b"><rect x="11.5" y="15" width="3" height="15"/><rect x="16.5" y="15" width="3" height="15"/><rect x="21.5" y="15" width="3" height="15"/></g></svg>
<div class="t" id="m4" style="left:2707.8px;top:1310.9px;font-size:29.3px;line-height:29.3px;color:#7b8693;font-weight:400;letter-spacing:-0.133px;">Delete</div>
<div class="b" style="left:2198px;top:929px;width:786px;height:159px;background:#fff;border-radius:6px;box-shadow:0 0 0 1.5px rgba(16,22,26,0.12),0 4px 8px rgba(16,22,26,0.18),0 16px 48px rgba(16,22,26,0.18);"></div>
<svg style="left:2706px;top:1086px" width="50" height="22" viewBox="0 0 50 22"><path d="M3 1 L26 19.5 L47 1 Z" fill="#fff"/></svg>
<div class="t" id="tt1" style="left:2215.0px;top:948.5px;font-size:24.4px;line-height:24.4px;color:#22222a;font-weight:400;letter-spacing:0.707px;-webkit-text-stroke:0.35px #22222a;">You are not authorized to ccm_autostoppingrule_edit Connectors.</div>
<div class="t" id="tt2" style="left:2214.1px;top:995.2px;font-size:24.4px;line-height:24.4px;color:#22222a;font-weight:400;letter-spacing:0.519px;">You are missing the following permission:</div>
<div class="t" id="tt3" style="left:2214.1px;top:1042.5px;font-size:24.4px;line-height:24.4px;color:#22222a;font-weight:400;letter-spacing:0.533px;">"ccm_autoStoppingRule_edit Connectors" in Account scope</div>
<div class="b" style="left:0px;top:0px;width:16px;height:1922px;background:linear-gradient(to right,rgba(30,40,60,0.07),rgba(30,40,60,0));"></div>
</body></html>
